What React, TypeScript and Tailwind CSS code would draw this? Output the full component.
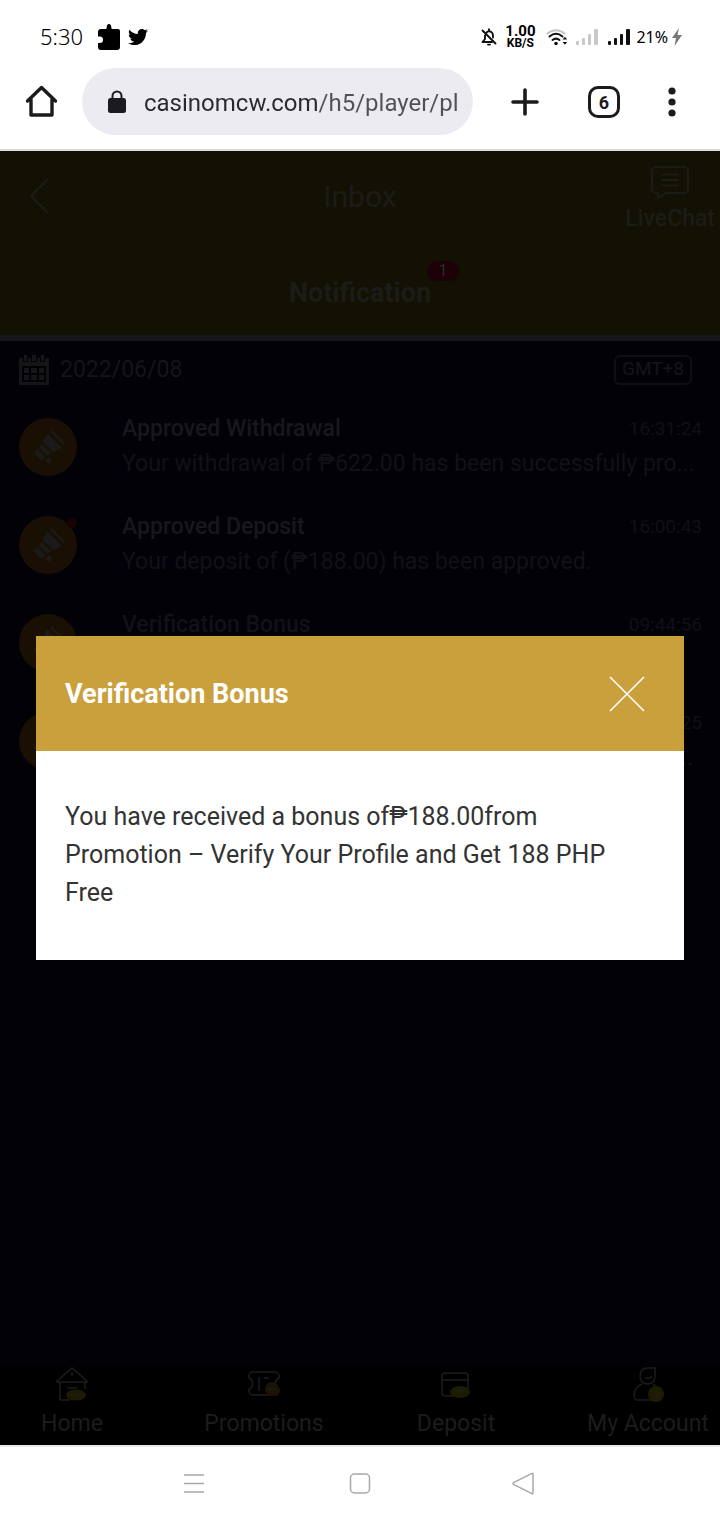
import { useState } from 'react';
import { FaTwitter } from 'react-icons/fa';

const messages = [
  { id: 1, title: 'Approved Withdrawal', time: '16:31:24', text: 'Your withdrawal of ₱622.00 has been successfully pro...', unread: false, dim: false },
  { id: 2, title: 'Approved Deposit', time: '16:00:43', text: 'Your deposit of (₱188.00) has been approved.', unread: true, dim: false },
  { id: 3, title: 'Verification Bonus', time: '09:44:56', text: 'You have received a bonus of₱188.00from', unread: false, dim: true },
  { id: 4, title: 'Verification Bonus', time: '09:41:25', text: 'Promotion – Verify Your Profile and Get 188 PHP Free ...', unread: false, dim: true },
];

function SignalBars({ className }: { className: string }) {
  return (
    <svg viewBox="0 0 22 18" className={className} fill="currentColor">
      <rect x="0" y="13" width="3" height="4" rx="1" />
      <rect x="6" y="10" width="3" height="7" rx="1" />
      <rect x="12" y="6" width="3" height="11" rx="1" />
      <rect x="18" y="1" width="4" height="16" rx="1" />
    </svg>
  );
}

function StatusBar() {
  return (
    <div className="flex h-[68px] items-center justify-between pt-1.5 pr-[38px] pl-10 text-black">
      <div className="flex items-center">
        <span className="w-[58px] pb-0.5 font-['Noto_Sans',sans-serif] text-[22px] font-light">5:30</span>
        <svg viewBox="0 0 22 26" className="h-[26px] w-[22px]">
          <path d="M3 5h4.500c.8 0 1.200-.6 1.200-1.500C8.700 1.500 9.500 0 11 0s2.300 1.500 2.300 3.500c0 .9.4 1.500 1.200 1.500H20a2 2 0 0 1 2 2v16a3 3 0 0 1-3 3H3a3 3 0 0 1-3-3v-4h1.800a3.200 3.200 0 0 0 0-6.400H0V8a3 3 0 0 1 3-3z" />
        </svg>
        <FaTwitter className="ml-2 h-5 w-5" />
      </div>
      <div className="flex items-center">
        <svg viewBox="0 0 18 18" className="h-[18px] w-[18px]" fill="none" stroke="#111" strokeWidth="1.900" strokeLinecap="round" strokeLinejoin="round">
          <path d="M6.500 4.500C7.200 3.700 8 3.300 9 3.300c2.600 0 4 2 4 4.700v1.500M5 7.500V11l-2.500 3H12M9 1.200v1.600M8 16.600h2M2.500 2.500l13 13" />
        </svg>
        <div className="ml-[7px] flex w-[30px] flex-col items-center font-['Roboto',sans-serif] font-bold">
          <span className="text-[15px] leading-3">1.00</span>
          <span className="text-[12px] leading-3">KB/S</span>
        </div>
        <svg viewBox="0 0 22 18" className="ml-[11px] h-[18px] w-[22px]" fill="none" strokeWidth="2" strokeLinecap="round">
          <path d="M1.500 5.500c5-4.500 12-4.500 17 0" stroke="#c4c4c4" />
          <path d="M3.500 8.500c4-3.300 9-3.300 13 0M6.500 12c2-1.600 5-1.600 7 0" stroke="#111" />
          <circle cx="10" cy="15.500" r="1.800" fill="#111" />
          <path d="M16.600 11.500l2.300-2.700 2.300 2.700zM16.600 14l2.300 2.700 2.300-2.700z" fill="#111" stroke="none" />
        </svg>
        <SignalBars className="ml-2 h-[18px] w-[22px] text-[#c9c9c9]" />
        <SignalBars className="ml-2.5 h-[18px] w-[22px] text-[#111]" />
        <span className="ml-1.5 font-['Noto_Sans',sans-serif] text-[16px]">21%</span>
        <svg viewBox="0 0 10 18" className="ml-1 h-[18px] w-2.5" fill="#777">
          <path d="M7 0L0 10h4L2.500 18 10 7H5.500z" />
        </svg>
      </div>
    </div>
  );
}

function BrowserBar() {
  return (
    <div className="flex h-[83px] items-start border-b-2 border-[#dededb] pr-[43px] pl-6 text-[#1b1b1f]">
      <button aria-label="Home page" className="mt-4">
        <svg viewBox="0 0 34 34" className="h-[34px] w-[34px]" fill="none" stroke="currentColor" strokeWidth="3.400" strokeLinejoin="round" strokeLinecap="round">
          <path d="M3.500 17L17.500 3.500 31.500 17M7 15v16h21V15" />
        </svg>
      </button>
      <label className="ml-6 flex h-[67px] min-w-0 flex-1 items-center rounded-full bg-[#ecebf2] pr-3 pl-[26px]">
        <svg viewBox="0 0 18 24" className="h-6 w-[18px] shrink-0" fill="currentColor">
          <rect x="0" y="8" width="18" height="15" rx="2.500" />
          <path d="M4.500 9V6a4.500 4.500 0 0 1 9 0v3" fill="none" stroke="currentColor" strokeWidth="2" />
        </svg>
        <input
          aria-label="Address"
          readOnly
          defaultValue="casinomcw.com/h5/player/pl"
          className="ml-[18px] w-full min-w-0 bg-[linear-gradient(90deg,#29292e_0_174px,#505055_174px)] bg-clip-text pt-0.5 text-[24px] text-transparent outline-none"
        />
      </label>
      <button aria-label="New tab" className="mt-5 ml-[38px]">
        <svg viewBox="0 0 28 28" className="h-7 w-7" stroke="currentColor" strokeWidth="3.600" strokeLinecap="round">
          <path d="M14 2v24M2 14h24" />
        </svg>
      </button>
      <button className="mt-[18px] ml-[49px] flex h-8 w-8 items-center justify-center rounded-[10px] border-3 border-current text-[18px] font-bold">6</button>
      <button aria-label="More" className="mt-[19px] ml-[47px]">
        <svg viewBox="0 0 10 30" className="h-[30px] w-2.5" fill="currentColor">
          <circle cx="5" cy="4" r="3.600" />
          <circle cx="5" cy="15" r="3.600" />
          <circle cx="5" cy="26" r="3.600" />
        </svg>
      </button>
    </div>
  );
}

function InboxHeader() {
  return (
    <header className="border-b-6 border-[#17161a] bg-[#131004] text-[#1d1b17]">
      <div className="grid h-[90px] grid-cols-[1fr_auto_1fr] items-center">
        <button aria-label="Back" className="ml-7 justify-self-start">
          <svg viewBox="0 0 22 36" className="h-9 w-[22px]" fill="none" stroke="currentColor" strokeWidth="2">
            <path d="M20 1L3 18l17 17" />
          </svg>
        </button>
        <h1 className="text-[30px]">Inbox</h1>
        <button className="mr-[5px] flex flex-col items-center gap-1 justify-self-end pt-2 text-[23px] leading-8 font-medium">
          <svg viewBox="0 0 38 34" className="h-[34px] w-[38px]" fill="none" stroke="currentColor" strokeWidth="2">
            <path d="M5 2h28a4 4 0 0 1 4 4v18a4 4 0 0 1-4 4H15l-8 5v-5H5a4 4 0 0 1-4-4V6a4 4 0 0 1 4-4zM10 9.500h18M10 15h18M10 20.500h18" />
          </svg>
          LiveChat
        </button>
      </div>
      <div className="flex h-[94px] items-center justify-center pt-2.5">
        <button className="relative text-[27px] font-bold">
          Notification
          <span className="absolute -top-3 -right-7 flex h-5 w-8 items-center justify-center rounded-full bg-[#1c0208] text-[16px] font-normal text-[#2c2c2c]">1</span>
        </button>
      </div>
    </header>
  );
}

function MessageRow({ title, time, text, unread, dim }: { title: string; time: string; text: string; unread: boolean; dim: boolean }) {
  return (
    <li className="flex h-[98px] items-center pr-[18px] pl-[19px]">
      <div className="relative flex h-[58px] w-[58px] shrink-0 items-center justify-center rounded-full bg-[#191003]">
        <svg viewBox="0 0 32 32" className="h-9 w-9 -rotate-45" fill="#1b1a1b">
          <path d="M3 11h5v10H3zM10 11l4-1v12l-4-1zM16 9l8-2v18l-8-2zM27 8h2v16h-2zM6 23h4v4H6z" />
        </svg>
        {unread && <span className="absolute top-0.5 right-0 h-2.5 w-2.5 rounded-full bg-[#180305]" />}
      </div>
      <div className={dim ? 'ml-[45px] min-w-0 flex-1 pb-0.5 text-[#111116]' : 'ml-[45px] min-w-0 flex-1 pb-0.5 text-[#18181c]'}>
        <div className="flex items-center justify-between leading-9">
          <h2 className="text-[23px] font-medium">{title}</h2>
          <time className="text-[19px] text-[#101014]">{time}</time>
        </div>
        <p className="truncate text-[23px] leading-[34px] text-[#111116]">{text}</p>
      </div>
    </li>
  );
}

function BottomNav() {
  return (
    <nav className="grid grid-cols-4 gap-12 bg-black pb-[3px] text-center text-[23px] leading-9 whitespace-nowrap text-[#1c1c1c]">
      <a href="#home" className="flex flex-col items-center gap-1">
        <svg viewBox="0 0 36 36" className="h-9 w-9" fill="none" stroke="currentColor" strokeWidth="1.500">
          <path d="M3 15L18 2l15 13v1H3zM6 16v18h10M31 16v7M18 6v4M13 22h10" />
          <ellipse cx="22" cy="29" rx="10" ry="5.500" fill="#1c1a02" stroke="none" />
          <path d="M16 29h12" />
        </svg>
        <span>Home</span>
      </a>
      <a href="#promotions" className="flex flex-col items-center gap-1">
        <svg viewBox="0 0 36 36" className="h-9 w-9" fill="none" stroke="currentColor" strokeWidth="1.500">
          <path d="M5 6h24a4 4 0 0 1 4 4v2a6 6 0 0 0 0 11v2a4 4 0 0 1-4 4H7a4 4 0 0 1-4-4v-2a6 6 0 0 0 0-11v-2a4 4 0 0 1 4-4M13 11v14M18 12h5" />
          <circle cx="26" cy="23" r="7" fill="#1c1402" stroke="none" />
          <path d="M22 23h8" />
        </svg>
        <span>Promotions</span>
      </a>
      <a href="#deposit" className="flex flex-col items-center gap-1">
        <svg viewBox="0 0 36 36" className="h-9 w-9" fill="none" stroke="currentColor" strokeWidth="1.500">
          <rect x="4" y="7" width="26" height="23" rx="3" />
          <path d="M4 14h26" />
          <ellipse cx="22" cy="26" rx="10" ry="6" fill="#1c1c02" stroke="none" />
          <path d="M17 25h10" />
        </svg>
        <span>Deposit</span>
      </a>
      <a href="#account" className="flex flex-col items-center gap-1">
        <svg viewBox="0 0 36 36" className="h-9 w-9" fill="none" stroke="currentColor" strokeWidth="1.500">
          <path d="M10 10c0-5 3-8 8-8h7v8c0 5-3 8-7.500 8S10 15 10 10zM15 11c2 2 5 2 7-1M12 18c-5 2-8 6-8 12 0 3 1 4 4 4h17M23 18l4 3" />
          <circle cx="26" cy="28" r="8" fill="#1c1c02" stroke="none" />
          <path d="M22 28h8M26 24v8" />
        </svg>
        <span>My Account</span>
      </a>
    </nav>
  );
}

function SystemNav() {
  return (
    <div className="flex h-[75px] items-center justify-center gap-[140px] border-t-2 border-[#e8e8e8] text-[#a9a9a9]">
      <button aria-label="Recent apps">
        <svg viewBox="0 0 24 24" className="h-6 w-6" stroke="currentColor" strokeWidth="1.600">
          <path d="M0 3h20M0 11.500h20M0 20h20" />
        </svg>
      </button>
      <button aria-label="Home screen">
        <svg viewBox="0 0 24 24" className="h-6 w-6" fill="none" stroke="currentColor" strokeWidth="1.500">
          <rect x="2.500" y="2" width="19" height="19" rx="4" />
        </svg>
      </button>
      <button aria-label="Go back">
        <svg viewBox="0 0 24 24" className="h-6 w-6" fill="none" stroke="currentColor" strokeWidth="1.500" strokeLinejoin="round">
          <path d="M20 1.300L1.500 10.700q-1 .8 0 1.600L20 21.700q1 .2 1-.8V2.100q0-1-1-.8z" />
        </svg>
      </button>
    </div>
  );
}

export default function App() {
  const [open, setOpen] = useState(true);

  return (
    <div className="flex min-h-screen flex-col bg-white font-['Roboto',sans-serif]">
      <StatusBar />
      <BrowserBar />
      <div className="relative flex flex-1 flex-col bg-[#020107]">
        <InboxHeader />
        <main className="flex-1">
          <div className="flex h-[57px] items-center pr-7 pl-[19px] text-[#151518]">
            <svg viewBox="0 0 30 30" className="h-[30px] w-[30px]" fill="currentColor">
              <path fillRule="evenodd" d="M0 3h4v4h5V3h3v4h6V3h3v4h5V3h4v27H0zM3 11v16h24V11z" />
              <path d="M5 0h3v6H5zM13 0h4v6h-4zM22 0h3v6h-3zM5 13h5v5H5zM12 13h6v5h-6zM20 13h5v5h-5zM5 20h5v5H5zM12 20h6v5h-6zM20 20h5v5h-5z" />
            </svg>
            <span className="ml-[11px] pt-0.5 text-[23px]">2022/06/08</span>
            <span className="ml-auto flex h-[30px] items-center rounded-md border-2 border-[#0f0f13] px-1.5 text-[19px]">GMT+8</span>
          </div>
          <ul>
            {messages.map(m => (
              <MessageRow key={m.id} title={m.title} time={m.time} text={m.text} unread={m.unread} dim={m.dim} />
            ))}
          </ul>
        </main>
        <BottomNav />

        {open && (
          <div className="absolute inset-0 flex items-center justify-center px-9">
            <section role="dialog" aria-labelledby="dialog-title" className="w-full bg-white">
              <div className="flex h-[115px] items-center justify-between bg-[#c9a03c] pr-[39px] pl-[29px] text-white">
                <h2 id="dialog-title" className="pt-0.5 text-[27px] font-bold">Verification Bonus</h2>
                <button aria-label="Close" onClick={() => setOpen(false)}>
                  <svg viewBox="0 0 36 36" className="h-9 w-9" stroke="currentColor" strokeWidth="1.600">
                    <path d="M1 1l34 34M35 1L1 35" />
                  </svg>
                </button>
              </div>
              <p className="px-[29px] pt-[47px] pb-12 text-[25px] leading-[38px] text-[#333]">
                You have received a bonus of₱188.00from Promotion – Verify Your Profile and Get 188 PHP Free
              </p>
            </section>
          </div>
        )}
      </div>
      <SystemNav />
    </div>
  );
}
